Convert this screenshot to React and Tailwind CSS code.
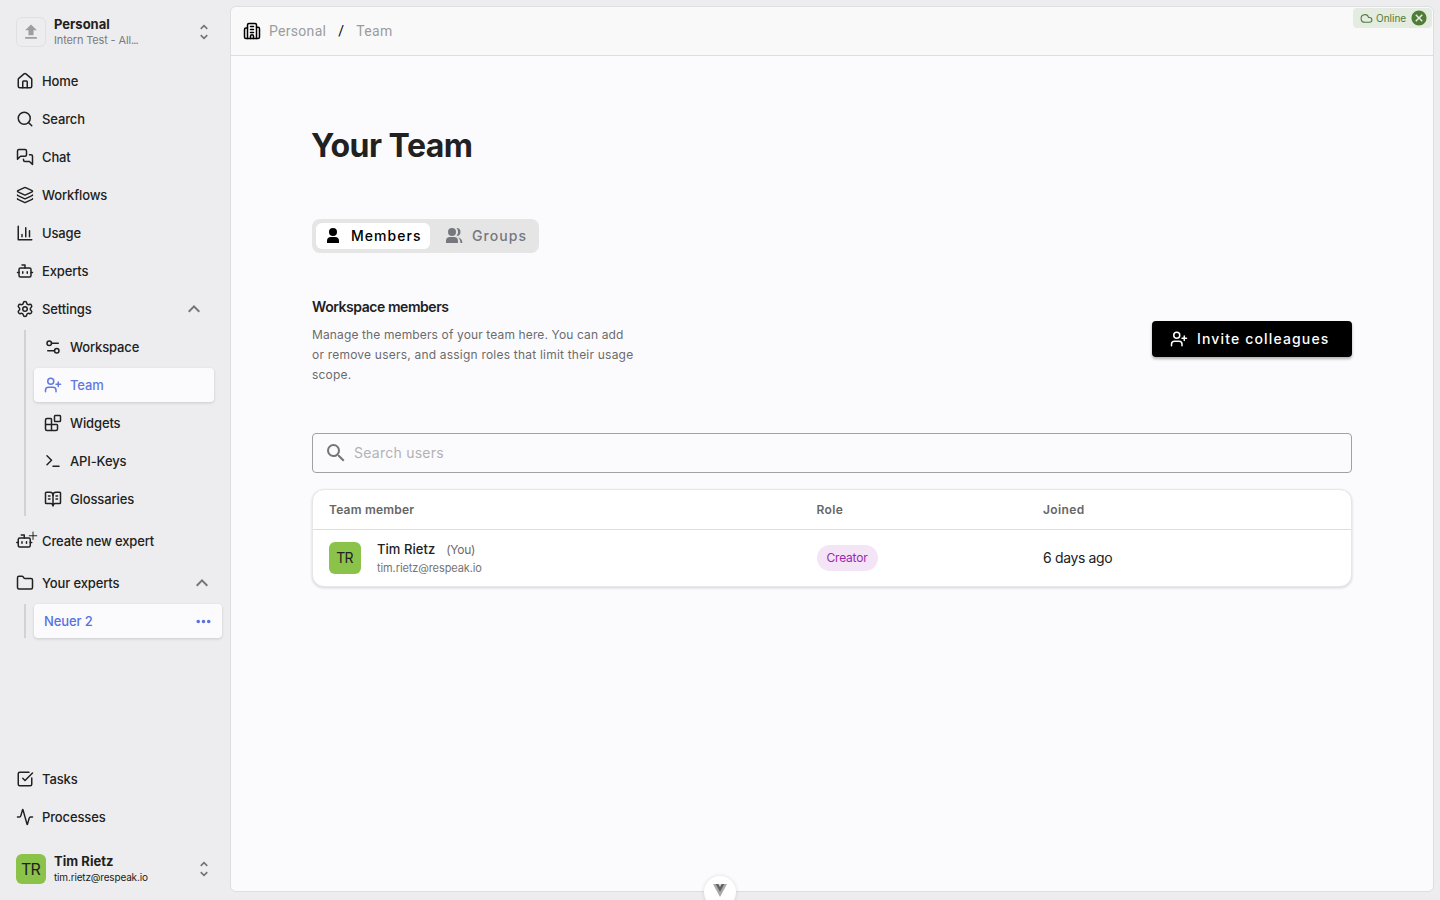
import { useState } from "react";
import {
    Activity,
    BookOpenText,
    Bot,
    Cloud,
    Folder,
    House,
    Layers,
    Search,
    Settings,
    Settings2,
    SquareCheckBig,
    Terminal,
    UserPlus,
} from "lucide-react";
import { MdCancel, MdExpandLess, MdMoreHoriz, MdSearch, MdUnfoldMore, MdUpload } from "react-icons/md";

const Svg = ({ children, className = "" }) => (
    <svg
        width="18"
        height="18"
        viewBox="0 0 24 24"
        fill="none"
        stroke="currentColor"
        strokeWidth="2"
        strokeLinecap="round"
        strokeLinejoin="round"
        className={`shrink-0 overflow-visible ${className}`}
    >
        {children}
    </svg>
);

const ChatIcon = () => (
    <Svg>
        <path d="M14 9a2 2 0 0 1-2 2H6l-4 4V4c0-1.1.9-2 2-2h8a2 2 0 0 1 2 2v5Z" />
        <path d="M18 9h2a2 2 0 0 1 2 2v11l-4-4h-6a2 2 0 0 1-2-2v-1" />
    </Svg>
);

const UsageIcon = () => (
    <Svg>
        <path d="M3 3v18h18M18 17V9M13 17V5M8 17v-3" />
    </Svg>
);

const WidgetsIcon = () => (
    <Svg>
        <rect width="8" height="8" x="14" y="2" rx="1" />
        <path d="M10 22V7a1 1 0 0 0-1-1H4a2 2 0 0 0-2 2v12a2 2 0 0 0 2 2h12a2 2 0 0 0 2-2v-5a1 1 0 0 0-1-1H2" />
    </Svg>
);

const BotPlusIcon = () => (
    <Svg>
        <path d="M11 8V4H7" />
        <rect width="16" height="12" x="3" y="8" rx="2" />
        <path d="M1 14h2M19 14h2M14 13v2M8 13v2" />
        <path d="M22.7 0v10M17.7 5h10" strokeWidth="1.3" />
    </Svg>
);

const BuildingIcon = () => (
    <Svg className="text-black">
        <path d="M6 22V4a2 2 0 0 1 2-2h8a2 2 0 0 1 2 2v18" />
        <path d="M6 8H4a2 2 0 0 0-2 2v10a2 2 0 0 0 2 2h16a2 2 0 0 0 2-2V9a2 2 0 0 0-2-2h-2" />
        <path d="M10 6h4M10 10h4M10 14h4M10 22v-3a2 2 0 0 1 4 0v3" />
    </Svg>
);

const PersonIcon = () => (
    <svg width="18" height="18" viewBox="0 0 18 18" fill="currentColor" className="shrink-0">
        <circle cx="9" cy="5" r="4" />
        <path d="M3 16v-2a4 4 0 0 1 4-4h4a4 4 0 0 1 4 4v2z" />
    </svg>
);

const PeopleIcon = () => (
    <svg width="18" height="18" viewBox="0 0 18 18" fill="currentColor" className="shrink-0">
        <circle cx="7" cy="5" r="4" />
        <path d="M1 16v-2a4 4 0 0 1 4-4h4a4 4 0 0 1 4 4v2z" />
        <path d="M11.500 1a4 4 0 0 1 0 8 6 6 0 0 0 0-8zM13 10.2c2.6.6 4.4 2.6 4.4 5.8h-2c0-2.500-.8-4.500-2.400-5.800z" />
    </svg>
);

const mainItems = [
    { label: "Home", icon: <House size={18} /> },
    { label: "Search", icon: <Search size={18} /> },
    { label: "Chat", icon: <ChatIcon /> },
    { label: "Workflows", icon: <Layers size={18} /> },
    { label: "Usage", icon: <UsageIcon /> },
    { label: "Experts", icon: <Bot size={18} /> },
];

const settingsItems = [
    { label: "Workspace", icon: <Settings2 size={18} /> },
    { label: "Team", icon: <UserPlus size={18} /> },
    { label: "Widgets", icon: <WidgetsIcon /> },
    { label: "API-Keys", icon: <Terminal size={18} /> },
    { label: "Glossaries", icon: <BookOpenText size={18} /> },
];

const NavItem = ({ icon, label, children }) => (
    <button className="flex h-[38px] w-full items-center gap-2 pl-4 text-left">
        {icon}
        <span className="pt-0.5">{label}</span>
        {children}
    </button>
);

const Sidebar = () => {
    const [active, setActive] = useState("Team");

    return (
        <aside className="flex w-[230px] shrink-0 flex-col text-[13px] font-medium tracking-[-0.13px]">
            <div className="flex h-[62px] items-center gap-2 pt-0.5 pl-4">
                <div className="flex size-[30px] items-center justify-center rounded-md border border-[#e0e0e1] text-[#9e9e9e]">
                    <MdUpload size={20} />
                </div>
                <div className="w-[136px]">
                    <p className="text-[13px] leading-4 font-bold tracking-normal">Personal</p>
                    <p className="text-[11px] leading-4 font-normal tracking-[-0.15px] text-[#7b7b7c]">
                        Intern Test - All<span className="tracking-[-0.9px]">...</span>
                    </p>
                </div>
                <MdUnfoldMore size={20} className="ml-[-4px] text-[#727273]" />
            </div>

            <nav>
                {mainItems.map((item) => (
                    <NavItem key={item.label} icon={item.icon} label={item.label} />
                ))}
                <NavItem icon={<Settings size={18} />} label="Settings">
                    <MdExpandLess size={24} className="mr-6 ml-auto text-[#757575]" />
                </NavItem>
            </nav>

            <div className="mt-0.5 ml-6 flex h-[186px] flex-col border-l-2 border-[#d2d2d4] pl-2">
                {settingsItems.map((item) => (
                    <button
                        key={item.label}
                        onClick={() => setActive(item.label)}
                        className={`mb-1 flex h-[34px] w-[180px] shrink-0 items-center gap-2 rounded pl-2.5 ${active === item.label
                            ? "bg-[#fbfbfe] text-[#6278df] shadow-[0_1px_3px_rgba(0,0,0,0.15)]"
                            : ""
                            }`}
                    >
                        {item.icon}
                        <span className="pt-0.5">{item.label}</span>
                    </button>
                ))}
            </div>

            <div className="mt-1.5">
                <NavItem icon={<BotPlusIcon />} label="Create new expert" />
            </div>
            <div className="mt-1">
                <NavItem icon={<Folder size={18} />} label="Your experts">
                    <MdExpandLess size={24} className="mr-4 ml-auto text-[#757575]" />
                </NavItem>
            </div>
            <div className="mt-0.5 ml-6 border-l-2 border-[#d2d2d4] pl-2">
                <button className="flex h-[34px] w-[188px] items-center justify-between rounded bg-[#fbfbfe] pr-2 pl-2.5 text-[#5871df] shadow-[0_1px_3px_rgba(0,0,0,0.15)]">
                    <span className="pt-0.5">Neuer 2</span>
                    <MdMoreHoriz size={21} />
                </button>
            </div>

            <div className="mt-auto">
                <NavItem icon={<SquareCheckBig size={18} />} label="Tasks" />
                <NavItem icon={<Activity size={18} />} label="Processes" />
            </div>
            <div className="flex h-16 items-center gap-2 pt-0.5 pl-4">
                <div className="flex size-[30px] items-center justify-center rounded-md bg-[#8bc34a] pr-px text-base font-normal tracking-[-0.8px]">
                    TR
                </div>
                <div className="w-[136px]">
                    <p className="text-[13px] leading-4 font-bold tracking-[0.05px]">Tim Rietz</p>
                    <p className="text-[10px] leading-4 font-normal tracking-[-0.17px]">tim.rietz@respeak.io</p>
                </div>
                <MdUnfoldMore size={20} className="ml-[-4px] text-[#727273]" />
            </div>
        </aside>
    );
};

const Header = () => (
    <header className="flex h-[49px] shrink-0 items-center rounded-t-md border-b border-[#dedee0] bg-[#f9f9f9] pl-3 font-[Roboto] text-sm tracking-[0.3px] text-[#9c9c9c]">
        <BuildingIcon />
        <span className="ml-2">Personal</span>
        <span className="mx-3 text-black">/</span>
        <span>Team</span>
    </header>
);

const MembersTable = () => (
    <div className="mt-4 overflow-hidden rounded-xl border border-[#e7e7eb] bg-white shadow-[0_1px_3px_rgba(0,0,0,0.16)]">
        <div className="grid h-10 grid-cols-[487.5px_226.5px_1fr] items-center border-b border-[#dedee0] pl-4 text-xs font-semibold tracking-[0.2px] text-[#666]">
            <span>Team member</span>
            <span className="tracking-[0.4px]">Role</span>
            <span className="tracking-[0.4px]">Joined</span>
        </div>
        <div className="grid h-14 grid-cols-[487.5px_226.5px_1fr] items-center pl-4">
            <div className="flex items-center gap-4">
                <div className="flex size-8 items-center justify-center rounded-md bg-[#8bc34a] pr-px text-sm tracking-[-0.7px]">TR</div>
                <div className="pt-px">
                    <p className="text-[13px] leading-[19px] font-medium tracking-[0.05px]">
                        Tim Rietz
                        <span className="ml-[11px] text-xs font-normal tracking-[-0.3px] text-[#6a6a6a]">(You)</span>
                    </p>
                    <p className="text-[11px] leading-[18px] tracking-[-0.1px] text-[#747474]">tim.rietz@respeak.io</p>
                </div>
            </div>
            <div>
                <span className="flex h-[26px] w-[61px] items-center justify-center rounded-full bg-[#f3e4f6] text-xs tracking-[-0.2px] text-[#9c27b0]">
                    Creator
                </span>
            </div>
            <span className="text-sm tracking-[-0.35px]">6 days ago</span>
        </div>
    </div>
);

const Team = () => {
    const [tab, setTab] = useState("Members");
    const tabs = [
        { id: "Members", icon: <PersonIcon />, style: "w-[114px] gap-[9px] pl-2" },
        { id: "Groups", icon: <PeopleIcon />, style: "w-[105px] gap-[9px] pl-[15px]" },
    ];

    return (
        <section className="px-[81px] pt-[70px]">
            <h1 className="-ml-px text-[32px] leading-10 font-bold tracking-[-0.5px]">Your Team</h1>

            <div className="mt-[53px] flex h-[34px] w-[227px] rounded-lg bg-[#e5e5e5] p-1">
                {tabs.map((t) => (
                    <button
                        key={t.id}
                        onClick={() => setTab(t.id)}
                        className={`flex h-[26px] items-center rounded-md text-sm font-medium tracking-[1.05px] ${t.style} ${tab === t.id
                            ? "bg-white text-black"
                            : "text-[#77777f]"
                            }`}
                    >
                        {t.icon}
                        <span>{t.id}</span>
                    </button>
                ))}
            </div>

            <div className="mt-[42px] flex h-[90px] items-center justify-between">
                <div>
                    <h2 className="mb-[6px] text-sm leading-6 font-semibold tracking-[-0.45px]">Workspace members</h2>
                    <p className="text-xs leading-5 tracking-[0.21px] whitespace-nowrap text-[#6b6b6c]">
                        <span className="tracking-[0.13px]">Manage the members of your team here. You can add</span>
                        <br />
                        or remove users, and assign roles that limit their usage
                        <br />
                        scope.
                    </p>
                </div>
                <button className="mt-[-2px] flex h-9 w-[200px] items-center gap-[9px] rounded bg-black pl-[18px] text-sm font-medium tracking-[1.15px] text-white shadow-[0_2px_3px_rgba(0,0,0,0.3)]">
                    <UserPlus size={18} />
                    Invite colleagues
                </button>
            </div>

            <label className="mt-12 flex h-10 items-center rounded border border-[#a1a1a3] pl-[11px] text-[#757575]">
                <MdSearch size={24} />
                <input
                    placeholder="Search users"
                    className="ml-1.5 flex-1 text-sm tracking-[0.25px] outline-none placeholder:text-[#b2b2b4]"
                />
            </label>

            <MembersTable />
        </section>
    );
};

const App = () => (
    <div className="relative flex h-screen overflow-hidden bg-[#ededef] font-[Inter,sans-serif] text-[#212121]">
        <Sidebar />
        <main className="mt-1.5 mr-1.5 mb-2 flex flex-1 flex-col rounded-md border border-[#dedee0] bg-[#fbfbfe]">
            <Header />
            <Team />
        </main>

        {/* Connection status */}
        <div className="absolute top-2 right-2 flex h-5 w-[79px] items-center rounded bg-[#e4ebe1] pl-[7px] text-[10px] text-[#4f7d37]">
            <Cloud size={13} />
            <span className="ml-[3px]">Online</span>
            <MdCancel size={18} className="ml-1" />
        </div>

        {/* Devtools toggle */}
        <div className="absolute bottom-[-8px] left-[704px] flex size-8 justify-center rounded-full bg-white pt-2 shadow-[0_0_4px_rgba(0,0,0,0.12)]">
            <svg width="14" height="13" viewBox="0 0 14 13">
                <path d="M0 0h14L7 13z" fill="#a9a9a9" />
                <path d="M2.8 0h8.4L7 8z" fill="#606060" />
                <path d="M5.4 0h3.2L7 3z" fill="#ddd" />
            </svg>
        </div>
    </div>
);

export default App;
